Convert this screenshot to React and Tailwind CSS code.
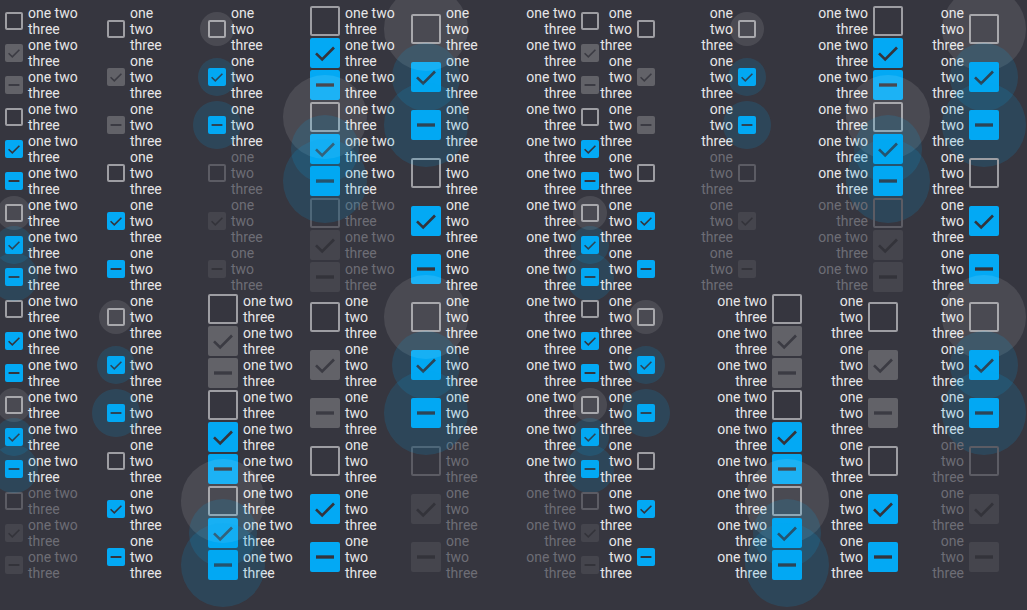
import React from 'react'

// state codes: u = unchecked, c = checked, p = partial, g* = gray (idle) variants, d* = disabled
const STATES = ['u', 'gc', 'gp', 'u', 'c', 'p', 'u', 'c', 'p', 'u', 'c', 'p', 'u', 'c', 'p', 'du', 'dc', 'dp']
const RIPPLE = [6, 7, 8, 12, 13, 14]

const SETS = {
  A: { big: false, lines: ['one two', 'three'], h: 'h-[32px]' },
  B: { big: false, lines: ['one', 'two', 'three'], h: 'h-[48px]' },
  C: { big: true, lines: ['one two', 'three'], h: 'h-[32px]' },
  D: { big: true, lines: ['one', 'two', 'three'], h: 'h-[48px]' },
}

function Mark({ state }) {
  const kind = state.slice(-1)
  if (kind === 'u') return null
  return (
    <svg viewBox="0 0 18 18" className="w-full h-full">
      {kind === 'c' ? (
        <polyline points="3.6,9.2 7.3,12.8 14.4,5.7" fill="none" stroke="currentColor" strokeWidth="1.6" />
      ) : (
        <rect x="3.6" y="8" width="10.8" height="2" fill="currentColor" />
      )}
    </svg>
  )
}

function Box({ big, state }) {
  const size = big ? 'w-[30px] h-[30px]' : 'w-[18px] h-[18px]'
  let look = ''
  if (state === 'u') look = 'border-2 border-[#9e9ea3]'
  else if (state === 'du') look = 'border-2 border-[#5c5c64]'
  else if (state === 'c' || state === 'p') look = 'bg-[#03a9f4] text-[#34343c]'
  else if (state === 'gc' || state === 'gp') look = 'bg-[#626268] text-[#3b3b43]'
  else look = 'bg-[#45454d] text-[#33333a]'
  return (
    <div className={`shrink-0 rounded-[2px] ${size} ${look}`}>
      <Mark state={state} />
    </div>
  )
}

function Ripple({ big, state }) {
  const kind = state.slice(-1)
  let cls = ''
  if (big) {
    cls = kind === 'c' ? 'w-[68px] h-[68px]' : 'w-[84px] h-[84px]'
  } else {
    cls = kind === 'u' ? 'w-[34px] h-[34px]' : kind === 'c' ? 'w-[38px] h-[38px]' : 'w-[48px] h-[48px]'
  }
  const color = kind === 'u' ? 'bg-white/10' : 'bg-[#03a9f4]/15'
  return <div className={`absolute z-10 top-1/2 -translate-x-1/2 -translate-y-1/2 rounded-full pointer-events-none ${cls} ${color}`} />
}

function Item({ set, index, rtl, extra = '' }) {
  const s = SETS[set]
  const state = STATES[index]
  const disabled = state.startsWith('d')
  const ripple = RIPPLE.includes(index)
  const center = s.big ? 'left-[15px]' : 'left-[9px]'
  const centerR = s.big ? 'right-[15px] translate-x-full' : 'right-[9px] translate-x-full'
  return (
    <div className={`relative flex items-center gap-[5px] ${s.h} ${rtl ? 'flex-row-reverse' : ''} ${extra}`}>
      <Box big={s.big} state={state} />
      <div className={`text-[14px] leading-[16px] whitespace-nowrap ${rtl ? 'text-right' : ''} ${disabled ? 'text-[#6d6d75]' : 'text-[#e6e6e8]'}`}>
        {s.lines.map((l, i) => (
          <div key={i}>{l}</div>
        ))}
      </div>
      {ripple && (
        <div className={`absolute top-1/2 ${rtl ? centerR : center}`}>
          <Ripple big={s.big} state={state} />
        </div>
      )}
    </div>
  )
}

function range(a, b) {
  const out = []
  for (let i = a; i <= b; i++) out.push(i)
  return out
}

function Column({ parts, rtl, className }) {
  return (
    <div className={`flex flex-col shrink-0 ${rtl ? 'items-end' : 'items-start'} ${className}`}>
      {parts.flatMap(([set, from, to, extra], pi) =>
        range(from, to).map(i => <Item key={`${pi}-${i}`} set={set} index={i} rtl={rtl} extra={extra} />)
      )}
    </div>
  )
}

export default function App() {
  return (
    <div className="w-[1027px] h-[610px] overflow-hidden bg-[#36363f] font-['Roboto',sans-serif] flex pt-[5px]">
      <Column className="ml-[5px] w-[102px]" parts={[['A', 0, 17]]} />
      <Column className="w-[101px]" parts={[['B', 0, 11]]} />
      <Column className="w-[102px]" parts={[['B', 12, 17], ['C', 0, 8]]} />
      <Column className="w-[101px]" parts={[['C', 9, 17], ['D', 0, 5]]} />
      <Column className="w-[109px]" parts={[['D', 6, 17]]} />

      <Column rtl className="w-[79px]" parts={[['A', 0, 17]]} />
      <Column rtl className="w-[56px]" parts={[['B', 0, 11]]} />
      <Column rtl className="ml-[45px] w-[102px]" parts={[['B', 12, 17, 'mr-[46px]'], ['C', 0, 8]]} />
      <Column rtl className="ml-[8px] w-[93px]" parts={[['C', 9, 17], ['D', 0, 5, 'mr-[5px]']]} />
      <Column rtl className="ml-[22px] w-[74px]" parts={[['D', 6, 17]]} />
    </div>
  )
}
